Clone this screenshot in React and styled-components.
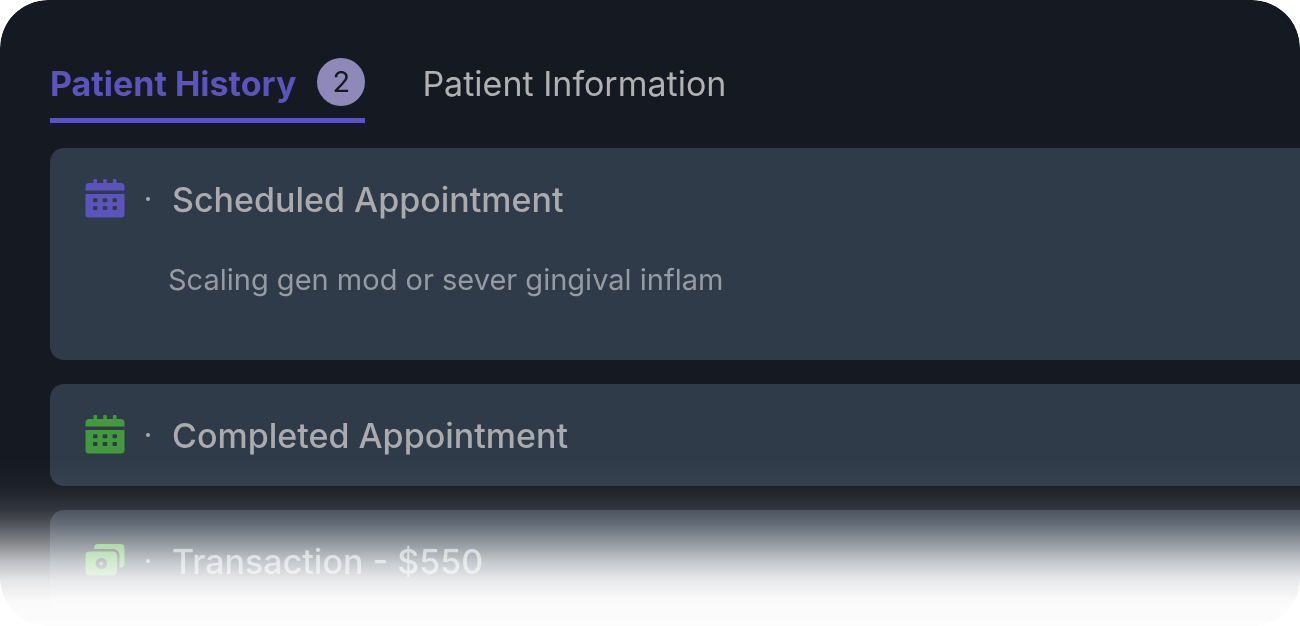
import React, { useState } from "react";
import styled, { createGlobalStyle } from "styled-components";

const tabs = [
    { id: "history", label: "Patient History", count: 2 },
    { id: "info", label: "Patient Information" },
];

const entries = [
    {
        title: "Scheduled Appointment",
        text: "Scaling gen mod or sever gingival inflam",
        color: "#5b54bd",
        Icon: CalendarIcon,
    },
    { title: "Completed Appointment", color: "#43993d", Icon: CalendarIcon },
    { title: "Transaction - $550", color: "#5fb553", Icon: MoneyIcon },
];

function CalendarIcon() {
    return (
        <svg width="40" height="40" viewBox="0 0 40 40" aria-hidden="true">
            <g fill="currentColor">
                <path d="M8.5 4V1.5a1.8 1.8 0 0 1 3.6 0V4h6.1V1.5a1.8 1.8 0 0 1 3.6 0V4h6.1V1.5a1.8 1.8 0 0 1 3.6 0V4H36a3.5 3.5 0 0 1 3.5 3.5V11.5H.5V7.5A3.5 3.5 0 0 1 4 4Z" />
                <path
                    fillRule="evenodd"
                    d="M.5 15h39v20a3.5 3.5 0 0 1-3.5 3.500H4a3.5 3.5 0 0 1-3.5-3.500ZM9 19.300h2.500a1 1 0 0 1 1 1v2a1 1 0 0 1-1 1H9a1 1 0 0 1-1-1v-2a1 1 0 0 1 1-1Zm9.700 0h2.600a1 1 0 0 1 1 1v2a1 1 0 0 1-1 1h-2.600a1 1 0 0 1-1-1v-2a1 1 0 0 1 1-1Zm9.800 0H31a1 1 0 0 1 1 1v2a1 1 0 0 1-1 1h-2.500a1 1 0 0 1-1-1v-2a1 1 0 0 1 1-1ZM9 27h2.500a1 1 0 0 1 1 1v2a1 1 0 0 1-1 1H9a1 1 0 0 1-1-1v-2a1 1 0 0 1 1-1Zm9.700 0h2.600a1 1 0 0 1 1 1v2a1 1 0 0 1-1 1h-2.600a1 1 0 0 1-1-1v-2a1 1 0 0 1 1-1Zm9.800 0H31a1 1 0 0 1 1 1v2a1 1 0 0 1-1 1h-2.500a1 1 0 0 1-1-1v-2a1 1 0 0 1 1-1Z"
                />
            </g>
        </svg>
    );
}

function MoneyIcon() {
    return (
        <svg width="40" height="40" viewBox="0 0 40 40" aria-hidden="true">
            <g fill="currentColor">
                <path
                    fillRule="evenodd"
                    d="M4.500 10.500h23.500a4 4 0 0 1 4 4v16a4 4 0 0 1-4 4H4.500a4 4 0 0 1-4-4v-16a4 4 0 0 1 4-4ZM16.300 16.700a5.800 5.800 0 1 0 0 11.600a5.800 5.800 0 0 0 0-11.600Z"
                />
                <circle cx="16.300" cy="22.500" r="2" />
                <path d="M9 8V7a4 4 0 0 1 4-4h22.500a4 4 0 0 1 4 4v15.500a4 4 0 0 1-4 4h-1V14a6 6 0 0 0-6-6Z" />
            </g>
        </svg>
    );
}

function App() {
    const [active, setActive] = useState("history");

    return (
        <>
            <GlobalStyle />
            <Panel>
                <Tabs role="tablist">
                    {tabs.map((tab) => (
                        <Tab
                            key={tab.id}
                            type="button"
                            role="tab"
                            aria-selected={active === tab.id}
                            $active={active === tab.id}
                            onClick={() => setActive(tab.id)}
                        >
                            <TabLabel>{tab.label}</TabLabel>
                            {tab.count ? <Badge>{tab.count}</Badge> : null}
                        </Tab>
                    ))}
                </Tabs>
                <List>
                    {entries.map(({ title, text, color, Icon }) => (
                        <Card key={title}>
                            <CardHeader>
                                <IconBox $color={color}>
                                    <Icon />
                                </IconBox>
                                <Dot />
                                <Title>{title}</Title>
                            </CardHeader>
                            {text ? <Text>{text}</Text> : null}
                        </Card>
                    ))}
                </List>
            </Panel>
        </>
    );
}

const GlobalStyle = createGlobalStyle`
    * {
        box-sizing: border-box;
    }
    body {
        margin: 0;
        background-color: #fff;
        font-family: Inter, "Liberation Sans", sans-serif;
    }
`;

const Panel = styled.main`
    min-height: 100vh;
    padding: 58px 0 14px 50px;
    border-radius: 48px;
    background-color: #151922;
    overflow: hidden;
    /* fades the last rows out into the page */
    mask-image: linear-gradient(
        to bottom,
        #000 calc(100% - 166px),
        rgba(0, 0, 0, 0.97) calc(100% - 141px),
        rgba(0, 0, 0, 0.88) calc(100% - 117px),
        rgba(0, 0, 0, 0.73) calc(100% - 100px),
        rgba(0, 0, 0, 0.52) calc(100% - 83px),
        rgba(0, 0, 0, 0.28) calc(100% - 64px),
        rgba(0, 0, 0, 0.1) calc(100% - 45px),
        rgba(0, 0, 0, 0.02) calc(100% - 23px),
        rgba(0, 0, 0, 0.01) 100%
    );
`;

const Tabs = styled.div`
    display: flex;
    gap: 57px;
    margin-bottom: 25px;
`;

const Tab = styled.button`
    display: flex;
    align-items: center;
    gap: 21px;
    min-height: 65px;
    padding: 0 0 12px;
    border: 0;
    border-bottom: 5px solid ${(props) => (props.$active ? "#5b54bd" : "transparent")};
    background: none;
    color: ${(props) => (props.$active ? "#5b54bd" : "#b1b1b1")};
    font-family: inherit;
    font-size: 34px;
    font-weight: ${(props) => (props.$active ? 700 : 400)};
    line-height: 48px;
    white-space: nowrap;
    cursor: pointer;
`;

const TabLabel = styled.span`
    padding-top: 4px;
    line-height: 44px;
`;

const Badge = styled.span`
    width: 48px;
    height: 48px;
    border-radius: 50%;
    background-color: #8f89b9;
    color: #151922;
    font-size: 29px;
    font-weight: 400;
    text-align: center;
`;

const List = styled.div`
    display: flex;
    flex-direction: column;
    gap: 24px;
`;

const Card = styled.article`
    border-radius: 14px 0 0 14px;
    background-color: #303b49;
`;

const CardHeader = styled.header`
    display: flex;
    align-items: center;
    height: 102px;
    padding: 0 35px;
`;

const IconBox = styled.span`
    display: flex;
    color: ${(props) => props.$color};
`;

const Dot = styled.span`
    width: 4px;
    height: 4px;
    margin: 0 22px 0 21px;
    border-radius: 50%;
    background-color: #a9abaf;
`;

const Title = styled.h2`
    margin: 0;
    padding-top: 2px;
    color: #a9abaf;
    font-size: 34px;
    font-weight: 500;
    line-height: 48px;
`;

const Text = styled.p`
    margin: 0;
    padding: 12px 36px 62px 118px;
    color: #959ba3;
    font-size: 29px;
    font-weight: 400;
    line-height: 36px;
`;

export default App;
